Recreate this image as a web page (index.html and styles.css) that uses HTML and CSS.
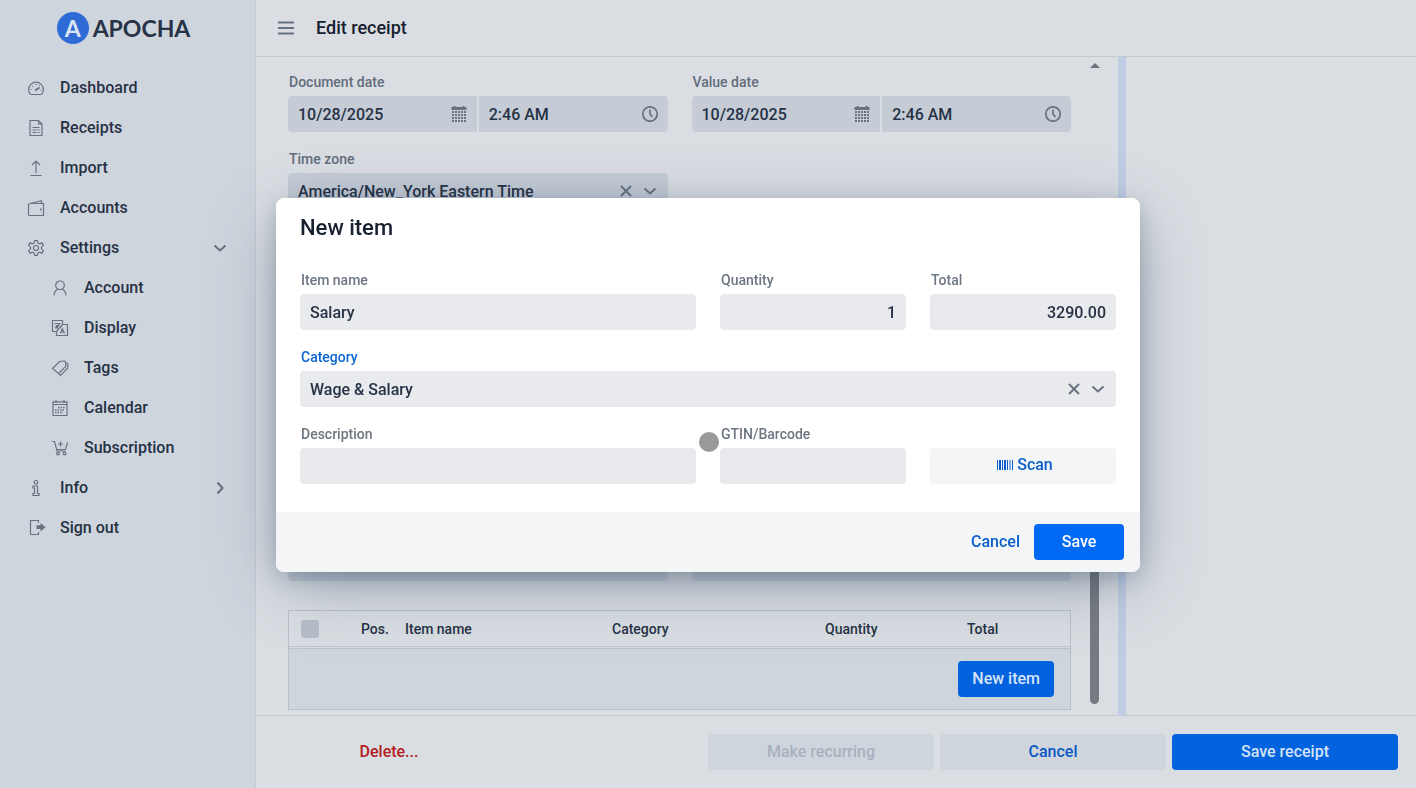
FILE: index.html
```html
<!DOCTYPE html>
<html lang="en">
<head>
    <meta charset="UTF-8">
    <meta name="viewport" content="width=device-width, initial-scale=1.0">
    <title>Edit receipt</title>
    <link rel="stylesheet" href="styles.css">
</head>
<body>
    <!-- shared icons -->
    <svg class="sprite" aria-hidden="true">
        <symbol id="chevron" viewBox="0 0 16 16"><path d="M2.500 5.500L8 10.500l5.500-5" stroke-width="2"/></symbol>
        <symbol id="cross" viewBox="0 0 16 16"><path d="M3 3l10 10M13 3L3 13" stroke-width="2"/></symbol>
        <symbol id="clock" viewBox="0 0 16 16"><circle cx="8" cy="8" r="7.200" stroke-width="1.700"/><path d="M8 3.500V8l2.500 3" stroke-width="1.700"/></symbol>
        <symbol id="date" viewBox="0 0 16 16">
            <path d="M.5 2.500h15" stroke-width="3"/>
            <path d="M3.500 0v2M12.500 0v2" stroke-width="2"/>
            <path d="M1 6h14M1 9h14M1 12h14M1 15h14" stroke-width="2" stroke-dasharray="2 1"/>
        </symbol>
    </svg>

    <div class="app">
        <aside class="sidebar">
            <a class="logo" href="#"><span class="logo-mark" aria-hidden="true">A</span>APOCHA</a>
            <nav>
                <a href="#"><svg class="icon" viewBox="0 0 16 16"><path d="M2.300 14A6.500 6.500 0 0 1 .6 9.300C.6 5.500 4 2.200 8 2.200s7.400 3.300 7.400 7.100A6.500 6.500 0 0 1 13.700 14q-.4.500-1.200.5h-9q-.8 0-1.200-.5z"/><path d="M7 10.500L11.500 7.500" stroke-width="1.800"/><path d="M2.500 9.500h1M12.500 10h1M4 6l.7.700M8 4v1M11.500 5.300l-.5.700"/></svg>Dashboard</a>
                <a href="#"><svg class="icon" viewBox="0 0 16 16"><path d="M2 .5h8.500L14 4v11.500H2zM10.500.5V4H14"/><path d="M4.500 7.500h7M4.500 10h4M9.500 10h2M4.500 12.500h4M9.500 12.500h2"/></svg>Receipts</a>
                <a href="#"><svg class="icon" viewBox="0 0 16 16"><path d="M8 13V1M4 5l4-4 4 4M2.500 15.500h11"/></svg>Import</a>
                <a href="#"><svg class="icon" viewBox="0 0 16 16"><path d="M2 3.500h13.500v12H1.500a1 1 0 0 1-1-1V5q0-1.200 1.500-1.500L13.500.7v2.800"/><path d="M12 9.500h1.500" stroke-width="1.800"/></svg>Accounts</a>
                <a href="#"><svg class="icon" viewBox="0 0 16 16"><path d="M6.700.6h2.600q.3 2.600 1.500 3t3.300-.7l1.300 2.300Q13.200 6.800 13.200 8t2.200 2.800l-1.300 2.300q-2.100-1.100-3.300-.7t-1.500 3H6.700q-.3-2.600-1.500-3t-3.300.7L.6 10.800Q2.800 9.200 2.800 8T.6 5.200l1.300-2.300q2.100 1.100 3.300.7t1.500-3z"/><circle cx="8" cy="8" r="2.500"/></svg>Settings<svg class="icon toggle"><use href="#chevron"/></svg></a>
                <a class="sub" href="#"><svg class="icon" viewBox="0 0 16 16"><circle cx="8" cy="5.300" r="4.300"/><path d="M2 15.500q.3-4.500 4-6.500M14 15.500q-.3-4.500-4-6.500"/></svg>Account</a>
                <a class="sub" href="#"><svg class="icon" viewBox="0 0 16 16"><path d="M5 11.500H.5V.5h10v4M10.500 4.500h5v11h-11v-4zM4.500 11.500l6-7"/><path d="M2.500 3.500h6M3.500 5.500h4M3 8q4-1 4-4M4 6l2 2M8.500 13.500l1.800-5 2.200 5M9.500 12h2.500"/></svg>Display</a>
                <a class="sub" href="#"><svg class="icon" viewBox="0 0 16 16"><path d="M.5 8.500L7.500 1.500l5-.5 1.200 1v4.500l-7.200 7z"/><path d="M14.500 2.800l1.300 1V8l-7.300 7.400-1.700-1.800"/></svg>Tags</a>
                <a class="sub" href="#"><svg class="icon" viewBox="0 0 16 16"><path d="M1 1.800h14v13.700H1zM1 4.500h14M4 0v3M12 0v3"/><path d="M6 7.500h7M3 10h10M3 12.500h8" stroke-width="1.500" stroke-dasharray="1.500 1"/></svg>Calendar</a>
                <a class="sub" href="#"><svg class="icon" viewBox="0 0 16 16"><path d="M0 1.500h2.500L5 11h8.500M15.500 2.500l-2 7h-9M8.500 1.500v5M6 4h5"/><circle cx="6" cy="13.500" r="1.400"/><circle cx="12.500" cy="13.500" r="1.400"/></svg>Subscription</a>
                <a href="#"><svg class="icon" viewBox="0 0 16 16"><circle cx="8" cy="2.300" r="1.800"/><path d="M5 6h4.500v7.500H11v2H5v-2h1.500V8H5z"/></svg>Info<svg class="icon toggle closed"><use href="#chevron"/></svg></a>
                <a href="#"><svg class="icon" viewBox="0 0 16 16"><path d="M10.500 3V.5h-8v14h8V12"/><path d="M8.500 5.300h4V3l5 4.200-5 4.200V9.100h-4z" fill="currentColor" stroke="none"/></svg>Sign out</a>
            </nav>
        </aside>

        <main class="main">
            <header class="topbar">
                <button class="menu" aria-label="Menu"><svg class="icon" viewBox="0 0 16 16"><path d="M0 2.500h16M0 8h16M0 13.500h16" stroke-width="2"/></svg></button>
                <h1>Edit receipt</h1>
            </header>

            <div class="split">
                <div class="editor">
                    <form class="receipt">
                        <div class="columns">
                            <div>
                                <label for="docDate">Document date</label>
                                <div class="pair">
                                    <div class="field"><input id="docDate" value="10/28/2025"><svg class="icon"><use href="#date"/></svg></div>
                                    <div class="field"><input aria-label="Document time" value="2:46 AM"><svg class="icon"><use href="#clock"/></svg></div>
                                </div>
                            </div>
                            <div>
                                <label for="valueDate">Value date</label>
                                <div class="pair">
                                    <div class="field"><input id="valueDate" value="10/28/2025"><svg class="icon"><use href="#date"/></svg></div>
                                    <div class="field"><input aria-label="Value time" value="2:46 AM"><svg class="icon"><use href="#clock"/></svg></div>
                                </div>
                            </div>
                            <div>
                                <label for="zone">Time zone</label>
                                <div class="field">
                                    <select id="zone"><option>America/New_York Eastern Time</option></select>
                                    <button type="button" class="clear" aria-label="Clear"><svg class="icon"><use href="#cross"/></svg></button>
                                    <svg class="icon"><use href="#chevron"/></svg>
                                </div>
                            </div>
                        </div>
                        <div class="columns notes">
                            <textarea aria-label="Note"></textarea>
                            <textarea aria-label="Reference"></textarea>
                        </div>
                        <div class="items">
                            <table>
                                <thead>
                                    <tr>
                                        <th class="col-check"><input type="checkbox" aria-label="Select all"></th>
                                        <th class="col-pos">Pos.</th>
                                        <th>Item name</th>
                                        <th class="col-category">Category</th>
                                        <th class="col-quantity">Quantity</th>
                                        <th class="col-total">Total</th>
                                    </tr>
                                </thead>
                            </table>
                            <div class="items-footer"><button type="button" class="btn primary">New item</button></div>
                        </div>
                    </form>
                    <div class="scrollbar" aria-hidden="true"><span class="arrow"></span><span class="thumb"></span></div>
                </div>
                <div class="splitter"></div>
                <div class="preview"></div>
            </div>

            <footer class="actions">
                <button class="btn delete">Delete...</button>
                <button class="btn" disabled>Make recurring</button>
                <button class="btn">Cancel</button>
                <button class="btn primary">Save receipt</button>
            </footer>
        </main>
    </div>

    <div class="overlay">
        <form class="dialog" role="dialog" aria-labelledby="dialogTitle">
            <h2 id="dialogTitle">New item</h2>
            <div class="dialog-body">
                <div class="wide">
                    <label for="name">Item name</label>
                    <div class="field"><input id="name" value="Salary"></div>
                </div>
                <div>
                    <label for="quantity">Quantity</label>
                    <div class="field number"><input id="quantity" value="1"></div>
                </div>
                <div>
                    <label for="total">Total</label>
                    <div class="field number"><input id="total" value="3290.00"></div>
                </div>
                <div class="full">
                    <label class="active" for="category">Category</label>
                    <div class="field">
                        <select id="category"><option>Wage &amp; Salary</option></select>
                        <button type="button" class="clear" aria-label="Clear"><svg class="icon"><use href="#cross"/></svg></button>
                        <svg class="icon"><use href="#chevron"/></svg>
                    </div>
                </div>
                <div class="wide">
                    <label for="description">Description</label>
                    <div class="field"><input id="description"></div>
                </div>
                <div>
                    <label for="gtin">GTIN/Barcode</label>
                    <div class="field"><input id="gtin"></div>
                </div>
                <button type="button" class="btn scan"><svg class="icon" viewBox="0 0 16 16"><path d="M.5 4v10M5.500 4v10M10.500 4v10M13 4v10M15.500 4v10"/><path d="M3 4v10M8 4v10" stroke-width="2"/></svg>Scan</button>
            </div>
            <div class="dialog-footer">
                <button type="button" class="btn link">Cancel</button>
                <button type="button" class="btn primary save">Save</button>
            </div>
            <span class="pointer"></span>
        </form>
    </div>
</body>
</html>
```
FILE: styles.css
```css
* {
    box-sizing: border-box;
}
body {
    margin: 0;
    font-family: Roboto, sans-serif;
    font-size: 16px;
    font-weight: 500;
    color: #263245;
    background-color: #dadee3;
}
h1, h2 {
    margin: 0;
    font-weight: 500;
    color: #17212f;
}
h1 {
    font-size: 18px;
    padding-bottom: 2px;
}
h2 {
    font-size: 22px;
    line-height: 28px;
    padding: 16px 24px 0;
}
a {
    color: inherit;
    text-decoration: none;
}
button, input, select, textarea {
    font: inherit;
    color: inherit;
    border: none;
    margin: 0;
    padding: 0;
    background: none;
}
.sprite {
    display: none;
}
svg {
    fill: none;
    stroke: currentColor;
}
.icon {
    width: 16px;
    height: 16px;
    flex: none;
    overflow: visible;
    color: #687382;
}
.app {
    display: flex;
    height: 100vh;
}

/* sidebar */
.sidebar {
    flex: none;
    width: 256px;
    background-color: #cfd5dd;
    border-right: 1px solid #c4cad3;
}
.logo {
    display: flex;
    align-items: center;
    justify-content: center;
    gap: 4px;
    height: 56px;
    padding-right: 8px;
    font: bold 23px Lato, sans-serif;
}
.logo-mark {
    width: 32px;
    border-radius: 50%;
    background-color: #2f6bd6;
    color: #dbe4f3;
    line-height: 32px;
    text-align: center;
}
nav {
    padding-top: 11px;
}
nav a {
    display: flex;
    align-items: center;
    gap: 16px;
    height: 40px;
    padding: 0 27px 0 28px;
}
nav .icon {
    margin-top: 2px;
    stroke-width: 1.2;
}
nav .sub {
    padding-left: 52px;
}
nav .toggle {
    margin-left: auto;
}
.closed {
    transform: rotate(-90deg);
}

/* page */
.main {
    flex: 1;
    min-width: 0;
    display: flex;
    flex-direction: column;
}
.topbar {
    display: flex;
    align-items: center;
    gap: 22px;
    height: 57px;
    padding-left: 22px;
    border-bottom: 1px solid #c5cad1;
}
.menu {
    display: flex;
}
.split {
    flex: 1;
    min-height: 0;
    display: flex;
}
.editor {
    flex: 1;
    display: flex;
    padding: 0 16px 0 32px;
}
.splitter {
    width: 8px;
    background-color: #c1cde5;
}
.preview {
    width: 25%;
}
.receipt {
    flex: 1;
    display: flex;
    flex-direction: column;
    padding: 17px 16px 5px 0;
}
.columns {
    display: grid;
    grid-template-columns: 1fr 1fr;
    gap: 19px 24px;
}
.notes {
    flex: 1;
    margin: 41px 0 29px;
}
textarea {
    resize: none;
    border-radius: 4px;
    background-color: #c5ccd6;
}
label {
    display: block;
    margin-bottom: 6px;
    padding-left: 1px;
    font-size: 14px;
    line-height: 16px;
    color: #626d7b;
}
.pair {
    display: flex;
    gap: 2px;
}
.pair .field {
    flex: 1;
}
.pair .field:first-child {
    border-radius: 4px 0 0 4px;
}
.pair .field:last-child {
    border-radius: 0 4px 4px 0;
}
.field {
    display: flex;
    align-items: center;
    gap: 8px;
    min-width: 0;
    height: 36px;
    padding: 0 10px;
    border-radius: 4px;
    background-color: #c5ccd6;
}
.field input, .field select {
    flex: 1;
    width: 100%;
    min-width: 0;
    appearance: none;
    outline: none;
}
.number input {
    text-align: right;
}
.clear {
    display: flex;
}
.scrollbar {
    width: 15px;
    display: flex;
    flex-direction: column;
    align-items: center;
    justify-content: space-between;
    padding: 6px 0 11px;
}
.arrow {
    border: 5px solid transparent;
    border-top: none;
    border-bottom-color: #6d737b;
}
.thumb {
    width: 9px;
    height: 50%;
    border-radius: 5px;
    background-color: #777b81;
}

/* items table */
.items {
    border: 1px solid #b8c0ca;
    background-color: #cfd5dd;
}
table {
    width: 100%;
    table-layout: fixed;
    border-collapse: separate;
    border-spacing: 0;
    background-color: #dadee3;
    border-bottom: 1px solid #bcc3cc;
}
th {
    height: 36px;
    padding: 0 8px;
    border-bottom: 1px solid #bcc3cc;
    font-size: 14px;
    font-weight: 500;
    text-align: left;
}
thead::after {
    content: "";
    display: block;
    height: 1px;
}
.col-check {
    width: 64px;
    padding-left: 12px;
}
.col-pos {
    width: 44px;
}
.col-category {
    width: 213px;
}
.col-quantity {
    width: 142px;
}
.col-total {
    width: 111px;
}
input[type="checkbox"] {
    display: block;
    appearance: none;
    width: 18px;
    height: 18px;
    border-radius: 3px;
    background-color: #b6bec9;
}
.items-footer {
    display: flex;
    justify-content: flex-end;
    padding: 12px 16px;
}

/* buttons */
.btn {
    height: 36px;
    padding: 0 14px 2px;
    border-radius: 4px;
    color: #0b57c4;
    background-color: #cfd5dd;
}
.btn:disabled {
    color: #a9b1be;
}
.btn.primary {
    color: #d6e4f8;
    background-color: #0362de;
}
.btn.delete {
    color: #b3201f;
    background: none;
    margin-right: auto;
}
.actions {
    display: flex;
    gap: 6px;
    padding: 18px 18px 18px 20px;
    border-top: 1px solid #c5cad1;
}
.actions .btn {
    flex: 0 1 226px;
}

/* new item dialog */
.overlay {
    position: fixed;
    inset: 0;
    display: flex;
    align-items: center;
    justify-content: center;
    padding: 0 16px 18px;
}
.dialog {
    position: relative;
    width: 100%;
    max-width: 864px;
    border-radius: 8px;
    background-color: #fff;
    box-shadow: 0 6px 24px -4px rgba(45, 65, 90, 0.38), 0 16px 64px -8px rgba(45, 65, 90, 0.42);
}
.dialog-body {
    display: grid;
    grid-template-columns: repeat(4, 1fr);
    align-items: end;
    gap: 19px 24px;
    padding: 30px 24px 28px;
}
.wide {
    grid-column: span 2;
}
.full {
    grid-column: 1 / -1;
}
.dialog label {
    color: #6c7580;
}
.dialog label.active {
    color: #0b66d4;
}
.dialog .field {
    background-color: #e9eaed;
}
.scan {
    display: flex;
    align-items: center;
    justify-content: center;
    gap: 4px;
}
.scan .icon {
    color: inherit;
}
.dialog .btn {
    color: #0b5fcc;
    background-color: #f3f5f7;
}
.dialog .btn.primary {
    color: #fff;
    background-color: #006af5;
}
.dialog .scan {
    padding: 0 10px 4px 14px;
}
.dialog-footer {
    display: flex;
    justify-content: flex-end;
    padding: 12px 16px;
    border-radius: 0 0 8px 8px;
    background-color: #f3f5f7;
}
.save {
    width: 90px;
}
.pointer {
    position: absolute;
    top: 234px;
    left: 50%;
    width: 20px;
    height: 20px;
    margin-left: -9px;
    border-radius: 50%;
    background-color: #999;
}
```
